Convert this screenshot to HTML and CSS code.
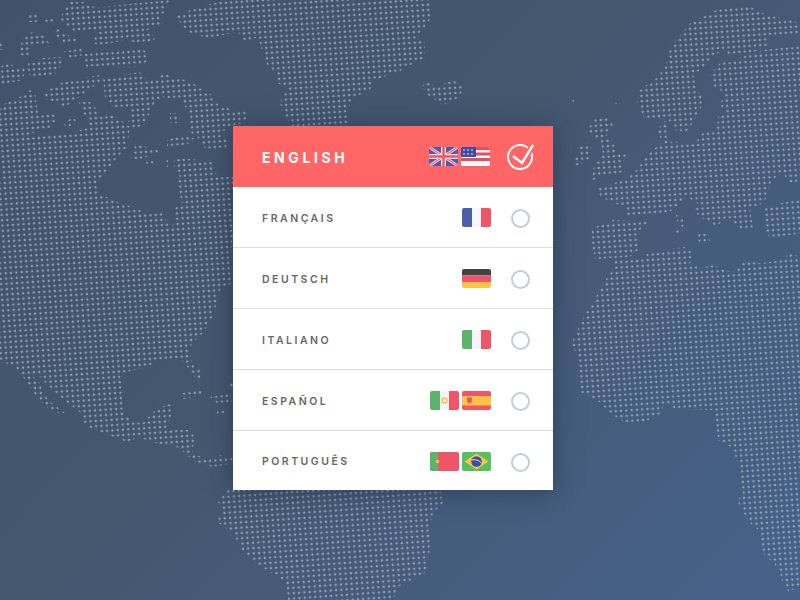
FILE: index.html
```html
<!DOCTYPE html>
<html lang="en">
<head>
<meta charset="utf-8">
<title>Language picker</title>
<link rel="stylesheet" href="styles.css">
</head>
<body>
<main class="stage">
  <svg class="map" viewBox="0 0 800 600" width="800" height="600" aria-hidden="true">
    <defs>
      <pattern id="dots" width="5.3" height="5.3" patternUnits="userSpaceOnUse" patternTransform="rotate(-4)">
        <rect x="1.5" y="1.5" width="2.2" height="2.2" rx="0.6" fill="#b4bfcc" fill-opacity="0.7"/>
      </pattern>
      <clipPath id="land">
        <!-- Arctic and North America -->
        <polygon points="60,18 70,2 84,2 96,8 120,5 170,0 160,20 163,24 147,30 157,38 143,45 128,40 100,45 92,43 97,32 75,32 65,25"/>
        <polygon points="29,13 37,13 37,22 29,22"/>
        <polygon points="45,20 53,19 53,23 45,24"/>
        <polygon points="0,42 4,42 4,50 0,50"/>
        <polygon points="20,50 23,35 33,32 43,35 52,47 43,45 33,43 30,47 28,58 20,58"/>
        <polygon points="52,33 57,28 63,33 78,40 72,45 63,43 57,38"/>
        <polygon points="63,52 82,48 83,55 70,58"/>
        <polygon points="85,52 100,50 137,48 148,52 147,62 133,67 110,68 87,68 85,63"/>
        <polygon points="28,63 43,58 63,57 62,65 53,75 33,78 28,73"/>
        <polygon points="0,68 5,62 12,63 13,68 25,68 23,80 0,85"/>
        <polygon points="52,88 63,82 100,75 100,82 85,93 75,100 65,107 50,100 43,98 43,93"/>
        <polygon points="103,78 140,72 147,80 157,80 163,72 173,78 187,80 210,93 215,103 227,107 233,113 240,113 233,126 220,133 227,140 227,147 207,150 200,143 197,135 188,132 190,117 182,100 163,97 157,100 150,110 147,123 132,130 128,123 132,108 113,107 105,97"/>
        <polygon points="170,113 180,113 180,123 170,123"/>
        <polygon points="167,140 183,135 200,140 183,145 167,147"/>
        <polygon points="78,100 90,102 100,113 100,118 90,120 83,113"/>
        <polygon points="62,124 72,118 80,122 68,127"/>
        <polygon points="0,107 10,100 20,97 30,90 35,93 38,113 57,115 58,120 50,128 33,133 13,142 0,147"/>
        <polygon points="0,147 13,142 23,135 45,135 70,132 80,130 88,128 90,118 113,115 123,122 130,127 127,147 115,160 98,183 97,192 112,200 132,207 147,213 163,213 170,228 175,222 173,210 182,203 177,183 180,177 173,163 175,157 213,162 217,177 233,177 240,175 240,240 232,240 232,283 220,290 213,317 203,333 192,343 190,350 192,363 203,372 198,382 190,370 180,358 160,360 147,367 123,373 120,377 125,393 122,397 123,413 133,422 143,423 157,408 173,403 170,420 165,430 190,430 197,440 192,448 193,453 207,460 220,455 233,457 233,463 213,467 197,463 187,455 180,448 167,445 150,442 140,437 127,442 117,438 103,433 90,428 83,423 80,412 63,400 50,387 38,375 23,377 13,365 0,362"/>
        <polygon points="23,377 30,375 38,380 48,400 65,413 52,412 37,398 30,387"/>
        <polygon points="130,142 157,150 160,153 137,160 130,157 135,147"/>
        <polygon points="146,162 154,161 154,165 146,166"/>
        <polygon points="165,160 168,160 168,167 165,167"/>
        <polygon points="182,393 200,390 207,395 183,399"/>
        <polygon points="210,397 230,393 232,402 217,403"/>
        <polygon points="217,410 225,409 225,413 217,414"/>
        <polygon points="227,383 233,383 233,388 227,388"/>
        <!-- Greenland -->
        <polygon points="175,15 200,7 225,0 430,0 432,15 427,25 420,32 418,38 425,43 425,58 410,65 397,73 373,80 370,90 353,98 347,110 348,123 348,126 292,126 283,113 280,102 288,88 277,83 275,72 267,65 262,50 258,37 245,42 238,32 207,38 187,32"/>
        <polygon points="230,112 247,110 247,122 230,126"/>
        <polygon points="422,87 427,80 437,88 447,82 457,80 463,88 460,97 443,105 428,95"/>
        <!-- South America -->
        <polygon points="218,502 227,490 440,490 443,503 433,513 430,525 430,548 425,573 398,587 393,600 288,600 285,582 275,575 255,563 242,550 233,533 217,522 222,510"/>
        <!-- Europe, traced at 3x from x=550 -->
        <polygon transform="translate(550 0) scale(.3333)" points="268,270 320,235 345,200 355,170 360,145 375,125 420,70 500,30 590,15 650,45 720,60 750,70 750,100 700,110 660,105 650,140 590,165 530,170 530,150 490,165 470,195 430,225 440,270 465,295 440,350 410,395 375,390 365,365 355,360 285,360 262,310"/>
        <polygon transform="translate(550 0) scale(.3333)" points="480,225 510,190 550,180 640,150 690,145 750,140 750,540 720,555 700,520 665,540 650,590 640,610 600,625 610,690 570,690 530,650 500,680 450,650 430,630 450,615 410,590 370,630 345,640 230,650 230,625 150,590 145,565 220,540 260,510 300,455 340,425 380,425 435,430 460,395 500,390 505,345 530,335 510,315 525,275 490,265"/>
        <polygon transform="translate(550 0) scale(.3333)" points="378,645 400,650 400,690 370,705 385,680"/>
        <polygon transform="translate(550 0) scale(.3333)" points="445,700 475,700 480,725 445,725"/>
        <polygon transform="translate(550 0) scale(.3333)" points="640,625 750,595 750,700 660,715 640,680"/>
        <polygon transform="translate(550 0) scale(.3333)" points="125,685 190,660 300,660 270,690 262,750 130,750"/>
        <polygon transform="translate(550 0) scale(.3333)" points="115,385 140,350 170,348 190,375 165,415 185,420 205,460 235,465 215,490 225,515 150,530 120,545 135,490 160,465 150,420 120,405"/>
        <polygon transform="translate(550 0) scale(.3333)" points="80,435 115,430 125,445 115,480 75,500 72,480 85,460"/>
        <polygon transform="translate(550 0) scale(.3333)" points="320,395 340,365 360,360 350,390 355,425 340,425"/>
        <polygon transform="translate(550 0) scale(.3333)" points="68,290 78,290 78,312 68,312"/>
        <polygon transform="translate(550 0) scale(.3333)" points="197,308 210,308 210,320 197,320"/>
        <!-- Spain and Africa, traced at 3x from x=550 y=240 -->
        <polygon transform="translate(550 240) scale(.3333)" points="125,0 270,0 265,30 240,50 135,58"/>
        <polygon transform="translate(550 240) scale(.3333)" points="190,60 270,60 300,35 410,20 430,45 420,70 450,85 490,75 550,100 580,60 630,70 700,60 715,40 750,50 750,1040 715,1055 695,1020 690,990 640,940 625,870 595,845 565,790 575,740 565,680 550,625 505,600 490,510 420,510 375,505 340,490 335,525 255,555 210,540 170,510 155,490 90,455 80,405 90,370 65,310 85,265 110,215 130,185 150,150 175,105 190,90"/>
      </clipPath>
    </defs>
    <rect width="800" height="600" fill="url(#dots)" clip-path="url(#land)"/>
  </svg>

  <section class="card">
    <div class="row row-active">
      <span class="label label-active">ENGLISH</span>
      <span class="flags">
        <svg class="flag" viewBox="0 0 29 19">
          <rect width="29" height="19" fill="#4a5cab"/>
          <path d="M0 0L29 19M29 0L0 19" stroke="#f6c5cb" stroke-width="3"/>
          <path d="M0 0L29 19M29 0L0 19" stroke="#ef5569" stroke-width="1"/>
          <path d="M14.5 0V19M0 9.5H29" stroke="#f6dfe3" stroke-width="5"/>
          <path d="M14.5 0V19M0 9.5H29" stroke="#ef5569" stroke-width="2.4"/>
        </svg>
        <svg class="flag" viewBox="0 0 29 19">
          <rect width="29" height="19" fill="#f7f8fb"/>
          <path d="M0 1.5H29M0 7H29M0 12.5H29" stroke="#df4f5e" stroke-width="3"/>
          <path d="M0 17.5H29" stroke="#f7f8fb" stroke-width="3"/>
          <rect width="15" height="10" fill="#3e4da3"/>
          <g fill="#f7f8fb"><circle cx="3" cy="3" r=".8"/><circle cx="7" cy="3" r=".8"/><circle cx="11" cy="3" r=".8"/><circle cx="3" cy="7" r=".8"/><circle cx="7" cy="7" r=".8"/><circle cx="11" cy="7" r=".8"/></g>
        </svg>
      </span>
      <svg class="check" viewBox="0 0 28 28">
        <circle cx="14" cy="14" r="12" fill="none" stroke="#fff" stroke-width="2"/>
        <path d="M7 13L16 20L27 2" fill="none" stroke="#ff6665" stroke-width="6"/>
        <path d="M7 13L16 20L27 2" fill="none" stroke="#fff" stroke-width="2.4"/>
      </svg>
    </div>

    <div class="row">
      <span class="label">FRANÇAIS</span>
      <span class="flags">
        <svg class="flag" viewBox="0 0 29 19"><rect width="10" height="19" fill="#4a5cab"/><rect x="10" width="9" height="19" fill="#f4f6fb"/><rect x="19" width="10" height="19" fill="#ef5569"/></svg>
      </span>
      <span class="radio"></span>
    </div>

    <div class="row">
      <span class="label">DEUTSCH</span>
      <span class="flags">
        <svg class="flag" viewBox="0 0 29 19"><rect width="29" height="6.5" fill="#434343"/><rect y="6.5" width="29" height="6.5" fill="#ef5569"/><rect y="13" width="29" height="6" fill="#fcc445"/></svg>
      </span>
      <span class="radio"></span>
    </div>

    <div class="row">
      <span class="label">ITALIANO</span>
      <span class="flags">
        <svg class="flag" viewBox="0 0 29 19"><rect width="10" height="19" fill="#5cb36b"/><rect x="10" width="9" height="19" fill="#f4f6fb"/><rect x="19" width="10" height="19" fill="#ef5569"/></svg>
      </span>
      <span class="radio"></span>
    </div>

    <div class="row">
      <span class="label">ESPAÑOL</span>
      <span class="flags">
        <svg class="flag" viewBox="0 0 29 19"><rect width="10" height="19" fill="#5cb36b"/><rect x="10" width="9" height="19" fill="#f4f6fb"/><rect x="19" width="10" height="19" fill="#ef5569"/><circle cx="14.5" cy="9.5" r="2.4" fill="none" stroke="#fcc445" stroke-width="1.6"/></svg>
        <svg class="flag" viewBox="0 0 29 19"><rect width="29" height="19" fill="#ef5569"/><rect y="5" width="29" height="9.5" fill="#fcc445"/><path d="M5 6.5H10V10.500L7.500 13L5 10.500Z" fill="#ef5569"/></svg>
      </span>
      <span class="radio"></span>
    </div>

    <div class="row">
      <span class="label">PORTUGUÊS</span>
      <span class="flags">
        <svg class="flag" viewBox="0 0 29 19"><rect width="29" height="19" fill="#ef5569"/><rect width="8" height="19" fill="#5cb36b"/><circle cx="7.500" cy="9.500" r="1.800" fill="#fcc445"/></svg>
        <svg class="flag" viewBox="0 0 29 19"><rect width="29" height="19" fill="#56c05f"/><path d="M14.500 1.500L26.500 9.500L14.500 17.500L2.500 9.500Z" fill="#fcc445"/><circle cx="14.500" cy="9.500" r="5.300" fill="#3e4da3"/><path d="M9.500 8C13 7 17 8.300 19.500 11" fill="none" stroke="#f4f6fb" stroke-width=".9"/></svg>
      </span>
      <span class="radio"></span>
    </div>
  </section>
</main>
</body>
</html>
```
FILE: styles.css
```css
* { box-sizing: border-box; }
html, body { margin: 0; padding: 0; }
body { width: 800px; height: 600px; overflow: hidden; }

.stage {
  position: relative;
  width: 800px;
  height: 600px;
  padding: 126px 0 0 233px;
  background: linear-gradient(135deg, #43526a 0%, #44576f 45%, #46628a 100%);
  overflow: hidden;
}

.map { position: absolute; top: 0; left: 0; display: block; }

.card {
  position: relative;
  width: 320px;
  background: #fff;
  box-shadow: 0 2px 22px rgba(28, 42, 66, 0.55);
}

.row {
  display: flex;
  align-items: center;
  height: 61px;
  padding: 0 23px 0 29px;
  border-bottom: 1px solid #dedede;
}
.row:last-child { height: 59px; padding-top: 2px; border-bottom: 0; }
.row:last-child .label { margin-top: 2px; }
.row-active { background: #ff6665; border-bottom: 0; padding-right: 19px; }

.label {
  flex: 1;
  margin-top: 4px;
  font: 600 10.500px/1 Inter, "Liberation Sans", sans-serif;
  letter-spacing: 2.500px;
  color: #666;
}
.label-active {
  margin-top: 2px;
  font-size: 14px;
  font-weight: 700;
  letter-spacing: 3.600px;
  color: #fff;
}

.flags { display: flex; gap: 3px; }
.flag { display: block; width: 29px; height: 19px; border-radius: 2px; }

.radio {
  width: 19px;
  height: 19px;
  margin: 2px 0 0 20px;
  border: 2px solid #bfd0cf;
  border-radius: 50%;
}
.check { display: block; width: 28px; height: 28px; margin-left: 16px; }
```
